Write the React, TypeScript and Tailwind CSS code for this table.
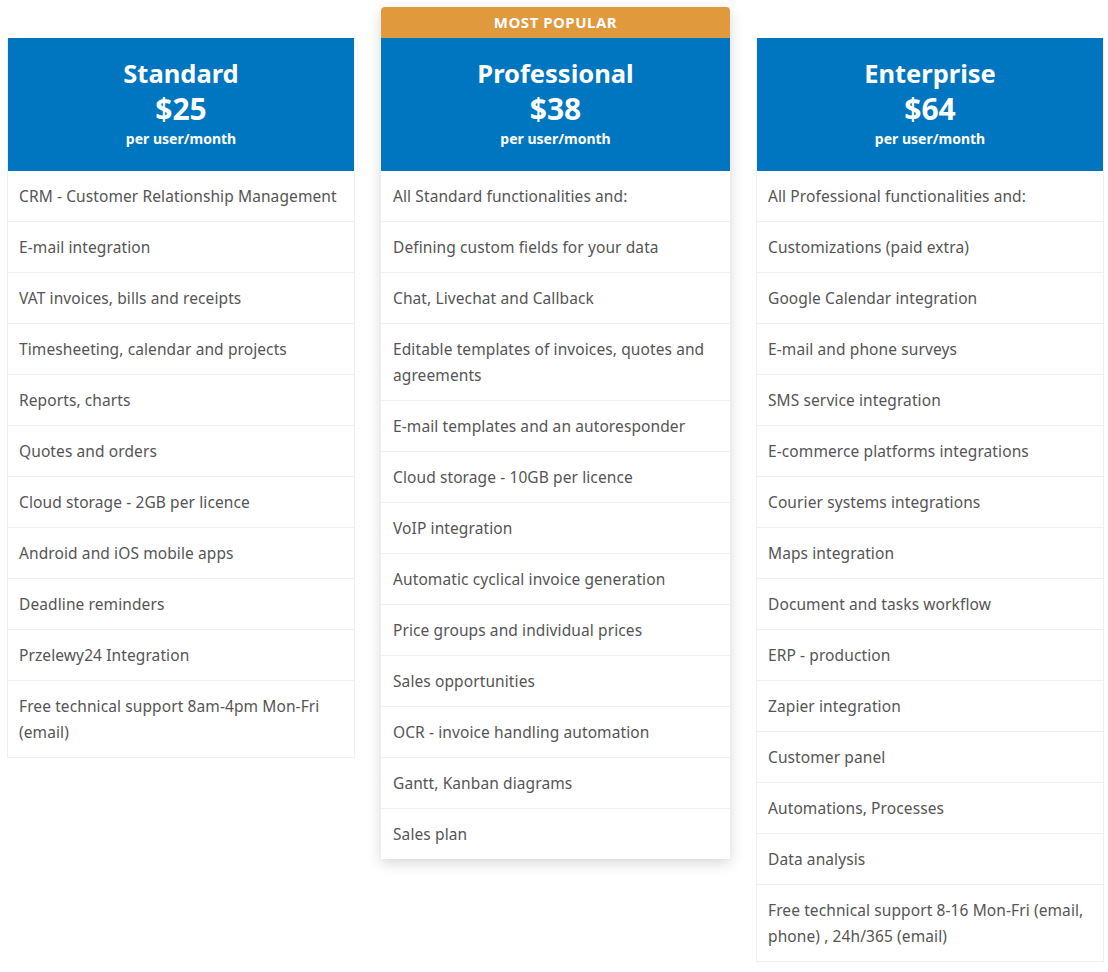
import React from 'react'

type Plan = {
  name: string
  price: string
  popular?: boolean
  features: string[]
}

const plans: Plan[] = [
  {
    name: 'Standard',
    price: '$25',
    features: [
      'CRM - Customer Relationship Management',
      'E-mail integration',
      'VAT invoices, bills and receipts',
      'Timesheeting, calendar and projects',
      'Reports, charts',
      'Quotes and orders',
      'Cloud storage - 2GB per licence',
      'Android and iOS mobile apps',
      'Deadline reminders',
      'Przelewy24 Integration',
      'Free technical support 8am-4pm Mon-Fri (email)',
    ],
  },
  {
    name: 'Professional',
    price: '$38',
    popular: true,
    features: [
      'All Standard functionalities and:',
      'Defining custom fields for your data',
      'Chat, Livechat and Callback',
      'Editable templates of invoices, quotes and agreements',
      'E-mail templates and an autoresponder',
      'Cloud storage - 10GB per licence',
      'VoIP integration',
      'Automatic cyclical invoice generation',
      'Price groups and individual prices',
      'Sales opportunities',
      'OCR - invoice handling automation',
      'Gantt, Kanban diagrams',
      'Sales plan',
    ],
  },
  {
    name: 'Enterprise',
    price: '$64',
    features: [
      'All Professional functionalities and:',
      'Customizations (paid extra)',
      'Google Calendar integration',
      'E-mail and phone surveys',
      'SMS service integration',
      'E-commerce platforms integrations',
      'Courier systems integrations',
      'Maps integration',
      'Document and tasks workflow',
      'ERP - production',
      'Zapier integration',
      'Customer panel',
      'Automations, Processes',
      'Data analysis',
      'Free technical support 8-16 Mon-Fri (email, phone) , 24h/365 (email)',
    ],
  },
]

function PlanCard({ plan }: { plan: Plan }) {
  return (
    <div
      className={
        plan.popular
          ? 'w-[349px] rounded-t-[4px] bg-white shadow-[0_4px_14px_rgba(0,0,0,0.16)]'
          : 'mt-[31px] w-[348px] border border-t-0 border-[#f0f0f0] bg-white'
      }
    >
      {plan.popular && (
        <div className="flex h-[31px] items-center justify-center rounded-t-[4px] bg-[#e0993d] text-[15px] font-bold uppercase tracking-[0.5px] text-white">
          Most popular
        </div>
      )}
      <div className="flex h-[133px] flex-col items-center bg-[#0176c0] pt-[16px] text-white">
        <div className="text-[25.5px] font-bold leading-[38px]">{plan.name}</div>
        <div className="text-[30px] font-bold leading-[34px]">{plan.price}</div>
        <div className="mt-[2px] text-[14px] font-bold leading-[22px]">per user/month</div>
      </div>
      <ul>
        {plan.features.map((f, i) => (
          <li
            key={i}
            className={
              (plan.popular ? 'px-[12px] ' : 'px-[11px] ') +
              'border-b border-[#f0f0f0] py-[12px] text-[15.5px] leading-[26px] tracking-[0.1px] text-[#555555] last:border-b-0'
            }
          >
            {f}
          </li>
        ))}
      </ul>
    </div>
  )
}

export default function App() {
  return (
    <div
      className="min-h-[972px] bg-white"
      style={{ fontFamily: '"Noto Sans", "Open Sans", sans-serif' }}
    >
      <div className="flex items-start gap-[26px] pl-[7px] pt-[7px]">
        {plans.map((p) => (
          <PlanCard key={p.name} plan={p} />
        ))}
      </div>
    </div>
  )
}
